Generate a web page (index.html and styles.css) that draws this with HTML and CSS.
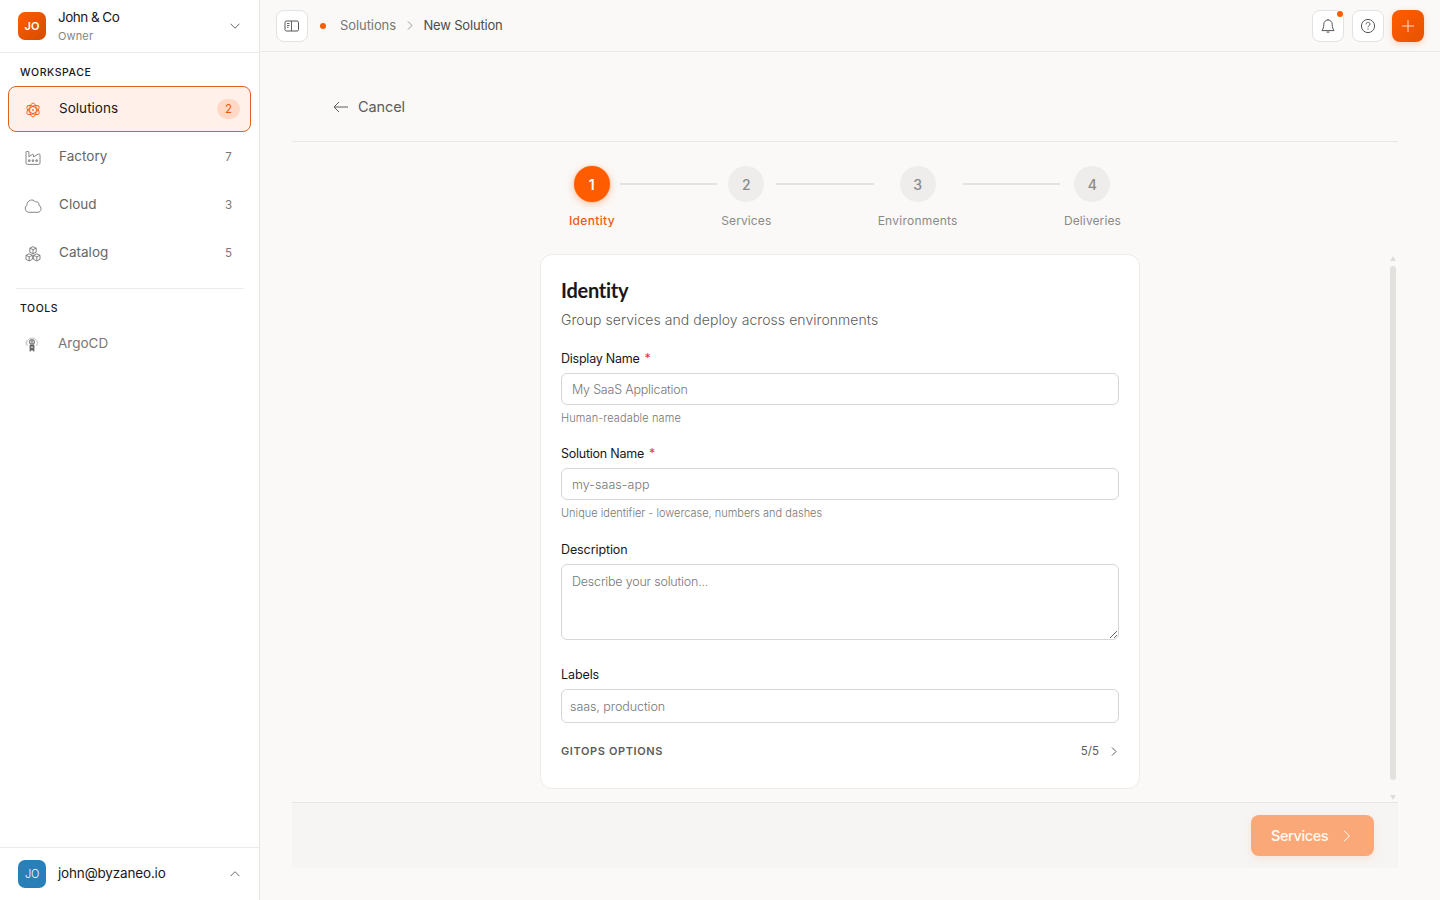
FILE: index.html
```html
<!DOCTYPE html>
<html lang="en">
<head>
<meta charset="utf-8">
<title>New Solution</title>
<link rel="stylesheet" href="styles.css">
</head>
<body>
<div class="app">
  <aside class="sidebar">
    <div class="account">
      <div class="avatar avatar-org">JO</div>
      <div class="account-text"><div class="org">John &amp; Co</div><div class="role">Owner</div></div>
      <svg class="chev" width="10" height="6" viewBox="0 0 10 6"><path d="M.5.7 5 5.2 9.5.7"/></svg>
    </div>
    <div class="section">WORKSPACE</div>
    <nav class="nav">
      <a class="item active">
        <svg class="icon" width="16" height="16" viewBox="0 0 16 16"><ellipse cx="8" cy="8" rx="3.4" ry="6.9"/><ellipse cx="8" cy="8" rx="3.4" ry="6.9" transform="rotate(60 8 8)"/><ellipse cx="8" cy="8" rx="3.4" ry="6.9" transform="rotate(120 8 8)"/><circle cx="8" cy="8" r=".5" class="solid"/></svg>
        <span class="name">Solutions</span><span class="count">2</span>
      </a>
      <a class="item">
        <svg class="icon" width="16" height="16" viewBox="0 0 16 16"><path d="M1 2.100c0-.4.3-.6.6-.6h1.700c.4 0 .6.2.6.6v4.700l3.600-2.500c.5-.3.9 0 .9.4v2.200l4.700-2.700c1-.6 1.900-.2 1.900.7v8.200c0 .7-.5 1.300-1.300 1.300H2.300c-.8 0-1.300-.6-1.300-1.300z"/><path d="M3.500 9.900h1.500v1.500H3.500zM7.200 9.900h1.500v1.500H7.200zM10.900 9.900h1.500v1.500h-1.500z"/></svg>
        <span class="name">Factory</span><span class="count">7</span>
      </a>
      <a class="item">
        <svg class="icon" width="18" height="16" viewBox="0 0 18 16"><path d="M4.700 14.300A3.900 3.900 0 0 1 2.900 7.200C2.900 2.200 9 .2 11.300 3.900c2.200-.8 4.200 1 3.600 3.400 3.300 1.500 2.600 7-1.100 7z"/></svg>
        <span class="name">Cloud</span><span class="count">3</span>
      </a>
      <a class="item">
        <svg class="icon" width="16" height="16" viewBox="0 0 16 16"><path d="M8 .7l3.200 1.400v4.100L8 7.700 4.800 6.200V2.100zM4.800 2.200 8 3.600l3.200-1.400M8 3.600v4.100M4.200 7.800l3.200 1.500v4L4.200 15 1 13.300v-4zM1 9.300l3.200 1.500 3.200-1.500M4.200 10.800V15M11.800 7.800 15 9.300v4L11.800 15l-3.200-1.700v-4zM8.600 9.300l3.200 1.500L15 9.300M11.800 10.800V15"/></svg>
        <span class="name">Catalog</span><span class="count">5</span>
      </a>
    </nav>
    <div class="rule"></div>
    <div class="section">TOOLS</div>
    <a class="tool">
      <svg width="14" height="16" viewBox="0 0 14 16"><path d="M2.300 9A5.300 5.300 0 0 1 7 1M11.700 9A5.300 5.300 0 0 0 7 1M1 7.500a6 6 0 0 1 1-4" fill="none" stroke="#c4c4c4"/><circle cx="7" cy="5" r="3.100" fill="#8f8f8f"/><path d="M4.600 8h4.800v6.500H8.200V13.500H5.800v1H4.600z" fill="#666"/><circle cx="5.800" cy="5" r=".7" fill="#fff"/><circle cx="8.200" cy="5" r=".7" fill="#fff"/><path d="M6.200 9.500h1.600v1.600H6.200z" fill="#ddd"/></svg>
      <span>ArgoCD</span>
    </a>
    <div class="user">
      <div class="avatar avatar-user">JO</div>
      <div class="email">john@byzaneo.io</div>
      <svg class="chev" width="10" height="6" viewBox="0 0 10 6"><path d="M.5 5.200 5 .7l4.500 4.500"/></svg>
    </div>
  </aside>
  <div class="page">
    <header class="topbar">
      <button class="square"><svg width="16" height="14" viewBox="0 0 16 14"><rect x="1" y="2" width="13.500" height="10" rx="1.500"/><path d="M7.500 2v10M3 4.500h2.500M3 6.500h2.500M3 8.300h1.500" stroke-width=".9"/></svg></button>
      <span class="dot"></span>
      <span class="crumb">Solutions</span>
      <svg class="sep" width="6" height="9" viewBox="0 0 6 9"><path d="M1 .5l4 4-4 4"/></svg>
      <span class="crumb-current">New Solution</span>
      <span class="grow"></span>
      <button class="square bell"><svg width="16" height="16" viewBox="0 0 16 16"><path d="M8 2a4.200 4.200 0 0 1 4.200 4.200c0 3.500.7 4.700 1.800 5.800v.6H2V12c1.100-1.100 1.800-2.300 1.800-5.800A4.200 4.200 0 0 1 8 2zM8 .9V2M6.500 14.100h3"/></svg><i class="badge"></i></button>
      <button class="square"><svg width="16" height="16" viewBox="0 0 16 16"><circle cx="8" cy="8" r="6.600"/><path d="M6 6.400c0-2.700 4-2.700 4-.3 0 1.500-2 1.500-2 3.100M8 10.500v1.200"/></svg></button>
      <button class="square add"><svg width="14" height="14" viewBox="0 0 14 14"><path d="M7 1v12M1 7h12"/></svg></button>
    </header>
    <main class="content">
      <div class="cancel"><svg width="16" height="12" viewBox="0 0 16 12"><path d="M15 6H1M6 1 1 6l5 5"/></svg><span>Cancel</span></div>
      <div class="body">
        <div class="column">
          <div class="steps">
            <div class="step step-1 current"><b>1</b><span>Identity</span></div><i class="line"></i>
            <div class="step step-2"><b>2</b><span>Services</span></div><i class="line"></i>
            <div class="step step-3"><b>3</b><span>Environments</span></div><i class="line"></i>
            <div class="step step-4"><b>4</b><span>Deliveries</span></div>
          </div>
          <form class="card">
            <h1>Identity</h1>
            <p class="lead">Group services and deploy across environments</p>
            <label class="label-name">Display Name<em>*</em></label>
            <input class="field tight" placeholder="My SaaS Application">
            <div class="hint hint-name">Human-readable name</div>
            <label class="label-name">Solution Name<em>*</em></label>
            <input class="field" placeholder="my-saas-app">
            <div class="hint hint-id">Unique identifier - lowercase, numbers and dashes</div>
            <label>Description</label>
            <textarea class="field area tight" placeholder="Describe your solution..."></textarea>
            <label>Labels</label>
            <input class="field tags" placeholder="saas, production">
            <div class="options"><strong>GITOPS OPTIONS</strong><span>5/5</span><svg width="6" height="9" viewBox="0 0 6 9"><path d="M1 .5l4 4-4 4"/></svg></div>
          </form>
        </div>
        <div class="scroll"><svg width="6" height="5" viewBox="0 0 6 5"><path d="M3 0l3 5H0z"/></svg><i></i><svg width="6" height="5" viewBox="0 0 6 5"><path d="M0 0h6L3 5z"/></svg></div>
      </div>
      <footer class="actions"><button class="next">Services<svg width="8" height="12" viewBox="0 0 8 12"><path d="M1 .8 6.500 6 1 11.200"/></svg></button></footer>
    </main>
  </div>
</div>
</body>
</html>
```

FILE: styles.css
```css
* { box-sizing: border-box; }
body { margin: 0; font-family: Inter, "Liberation Sans", sans-serif; color: #18181b; background: #faf9f7; }
button, input, textarea { font-family: inherit; margin: 0; }
svg { display: block; flex: none; fill: none; stroke: currentColor; }
.app { display: flex; width: 1440px; height: 900px; overflow: hidden; }

.sidebar { width: 260px; flex: none; background: #fff; border-right: 1px solid #e6e5e3; display: flex; flex-direction: column; }
.account { height: 53px; border-bottom: 1px solid #ebebea; display: flex; align-items: center; padding: 0 19px 0 18px; }
.avatar { width: 28px; height: 28px; border-radius: 7px; color: #fff; display: flex; align-items: center; justify-content: center; }
.avatar-org { background: linear-gradient(135deg, #ff5c00, #d44c00); font-size: 11px; font-weight: 600; }
.avatar-user { background: #2980b9; font-size: 11px; font-weight: 300; letter-spacing: -.2px; }
.account-text { margin-left: 12px; flex: 1; }
.org { font-size: 13.500px; line-height: 19px; letter-spacing: -.53px; padding-top: 1px; }
.role { font-size: 11px; line-height: 18px; letter-spacing: .15px; color: #858585; }
.chev { color: #666; }
.section { font-size: 10.500px; line-height: 14px; font-weight: 500; letter-spacing: .57px; margin-top: 13px; padding-left: 20px; }
.nav { margin-top: 6px; padding: 0 8px; display: flex; flex-direction: column; gap: 2px; }
.item { height: 46px; border: 1px solid transparent; border-radius: 8px; display: flex; align-items: center; padding: 0 10px 0 15px; color: #666; }
.item .icon { width: 18px; stroke-width: .9; color: #777; margin-top: 2px; }
.name { margin-left: 17px; flex: 1; font-size: 13.500px; letter-spacing: .03px; line-height: 20px; margin-top: -2px; }
.count { width: 23px; height: 20px; line-height: 20px; border-radius: 10px; text-align: center; font-size: 11.500px; color: #777; }
.active { background: #fff1ea; border-color: #dc6420; color: #18181b; }
.active .icon { color: #f26018; }
.active .count { background: #ffd9c5; color: #e85d0d; }
.solid { fill: currentColor; }
.rule { height: 1px; margin: 12px 15px 0 16px; background: #ebebea; }
.tool { display: flex; align-items: center; height: 36px; margin-top: 11px; padding-left: 25px; color: #777; font-size: 13.500px; }
.tool svg { stroke: none; }
.tool span { margin-left: 19px; margin-top: -4px; }
.user { margin-top: auto; height: 53px; border-top: 1px solid #ebebea; display: flex; align-items: center; padding: 0 19px 0 18px; }
.email { margin-left: 12px; flex: 1; font-size: 13.500px; letter-spacing: -.17px; margin-top: -2px; }

.page { flex: 1; min-width: 0; display: flex; flex-direction: column; }
.topbar { height: 52px; border-bottom: 1px solid #ebeae8; display: flex; align-items: center; padding: 0 16px; }
.square { position: relative; width: 32px; height: 32px; flex: none; border: 1px solid #e3e2e0; border-radius: 8px; background: #fff; padding: 0; color: #555; display: flex; align-items: center; justify-content: center; }
.square + .square { margin-left: 8px; }
.add { border: 0; background: linear-gradient(135deg, #ff5c00, #e65300); color: #fff; box-shadow: 0 2px 6px rgba(255, 92, 0, .25); }
.add svg { opacity: .8; }
.badge { position: absolute; width: 6px; height: 6px; right: 0; top: 0; border-radius: 50%; background: #ff5c00; }
.dot { width: 6px; height: 6px; border-radius: 50%; background: #ff5c00; margin: 0 14px 0 12px; }
.crumb, .crumb-current { font-size: 13px; line-height: 18px; margin-top: -1px; }
.crumb { color: #777; letter-spacing: -.08px; }
.crumb-current { color: #4c4c4c; letter-spacing: -.19px; }
.sep { margin: 0 10.500px 0 11px; color: #999; }
.grow { flex: 1; }

.content { flex: 1; padding: 20px 42px 32px 32px; display: flex; flex-direction: column; }
.cancel { height: 70px; border-bottom: 1px solid #e9e8e6; display: flex; align-items: center; padding-left: 41px; gap: 9px; font-size: 14.500px; letter-spacing: -.1px; color: #5c5c5c; }
.body { flex: 1; display: flex; justify-content: space-between; }
.column { width: 600px; margin-left: 248px; padding-top: 24px; }
.steps { display: flex; height: 88px; padding: 0 19px 0 29px; }
.step { display: flex; flex-direction: column; align-items: center; color: #8a8a8a; font-size: 12px; }
.step b { width: 36px; height: 36px; line-height: 37px; text-align: center; border-radius: 50%; background: #eeedeb; font-size: 14px; font-weight: 500; }
.step span { line-height: 16px; margin-top: 11px; white-space: nowrap; }
.step-1 { width: 46px; letter-spacing: .34px; }
.step-2 { width: 50px; letter-spacing: .1px; }
.step-3 { width: 80px; letter-spacing: .24px; }
.step-4 { width: 57px; letter-spacing: .11px; }
.current { color: #f05a0a; font-weight: 500; }
.current b { background: #ff5c00; color: #fff; font-weight: 600; box-shadow: 0 0 0 1px rgba(255, 92, 0, .12), 0 2px 9px rgba(255, 92, 0, .35); }
.line { flex: 1; height: 2px; background: #e3e2e0; margin: 17px 4px 0 5px; }

.card { width: 600px; height: 535px; background: #fff; border: 1px solid #edecea; border-radius: 12px; padding: 21px 20px 0; display: flex; flex-direction: column; }
h1 { margin: 0; font: 700 20px/28px Lato, sans-serif; letter-spacing: -.25px; }
.lead { margin: 5px 0 19px; font-size: 14px; line-height: 22px; font-weight: 300; letter-spacing: .06px; color: #5c5c5c; }
label { font-size: 12.500px; line-height: 18px; letter-spacing: -.1px; margin-bottom: 5px; }
.label-name { letter-spacing: -.24px; }
em { color: #dc3a3a; font-style: normal; margin-left: 5px; }
.field { display: block; width: 100%; height: 32px; border: 1px solid #d6d6d6; border-radius: 6px; background: #fff; padding: 0 10px; font-size: 12.500px; font-weight: 300; letter-spacing: .05px; outline: 0; }
.field::placeholder { color: #777; opacity: 1; }
.tight { letter-spacing: -.2px; }
.area { height: 76px; padding: 8px 10px; line-height: 18px; resize: vertical; margin-bottom: 26px; }
.tags { height: 34px; padding: 0 8px; letter-spacing: -.07px; }
.hint { margin-top: 4px; line-height: 18px; font-size: 11px; font-weight: 300; color: #777; }
.hint-name { letter-spacing: .11px; margin-bottom: 18px; }
.hint-id { margin-bottom: 19px; }
.options { display: flex; align-items: center; height: 18px; margin-top: 19px; padding-right: 2px; font-size: 11.500px; color: #5c5c5c; }
.options strong { flex: 1; font-size: 11px; font-weight: 600; letter-spacing: .61px; }
.options svg { margin-left: 12px; }

.scroll { width: 6px; margin-right: 2px; padding: 114px 0 2px; display: flex; flex-direction: column; gap: 4px; color: #dededb; }
.scroll svg { fill: currentColor; stroke: none; }
.scroll i { flex: 1; border-radius: 3px; background: #e2e1de; margin: 1px 0 11px; }
.actions { height: 66px; background: #f6f5f3; border-top: 1px solid #e6e5e3; display: flex; justify-content: flex-end; align-items: center; padding: 0 24px; }
.next { width: 123px; height: 41px; border: 0; border-radius: 8px; background: #fba878; color: #fffaf5; font-size: 14.500px; font-weight: 500; letter-spacing: -.4px; display: flex; align-items: center; padding: 0 0 0 20px; gap: 15px; box-shadow: 0 3px 10px rgba(255, 92, 0, .1); }
```
